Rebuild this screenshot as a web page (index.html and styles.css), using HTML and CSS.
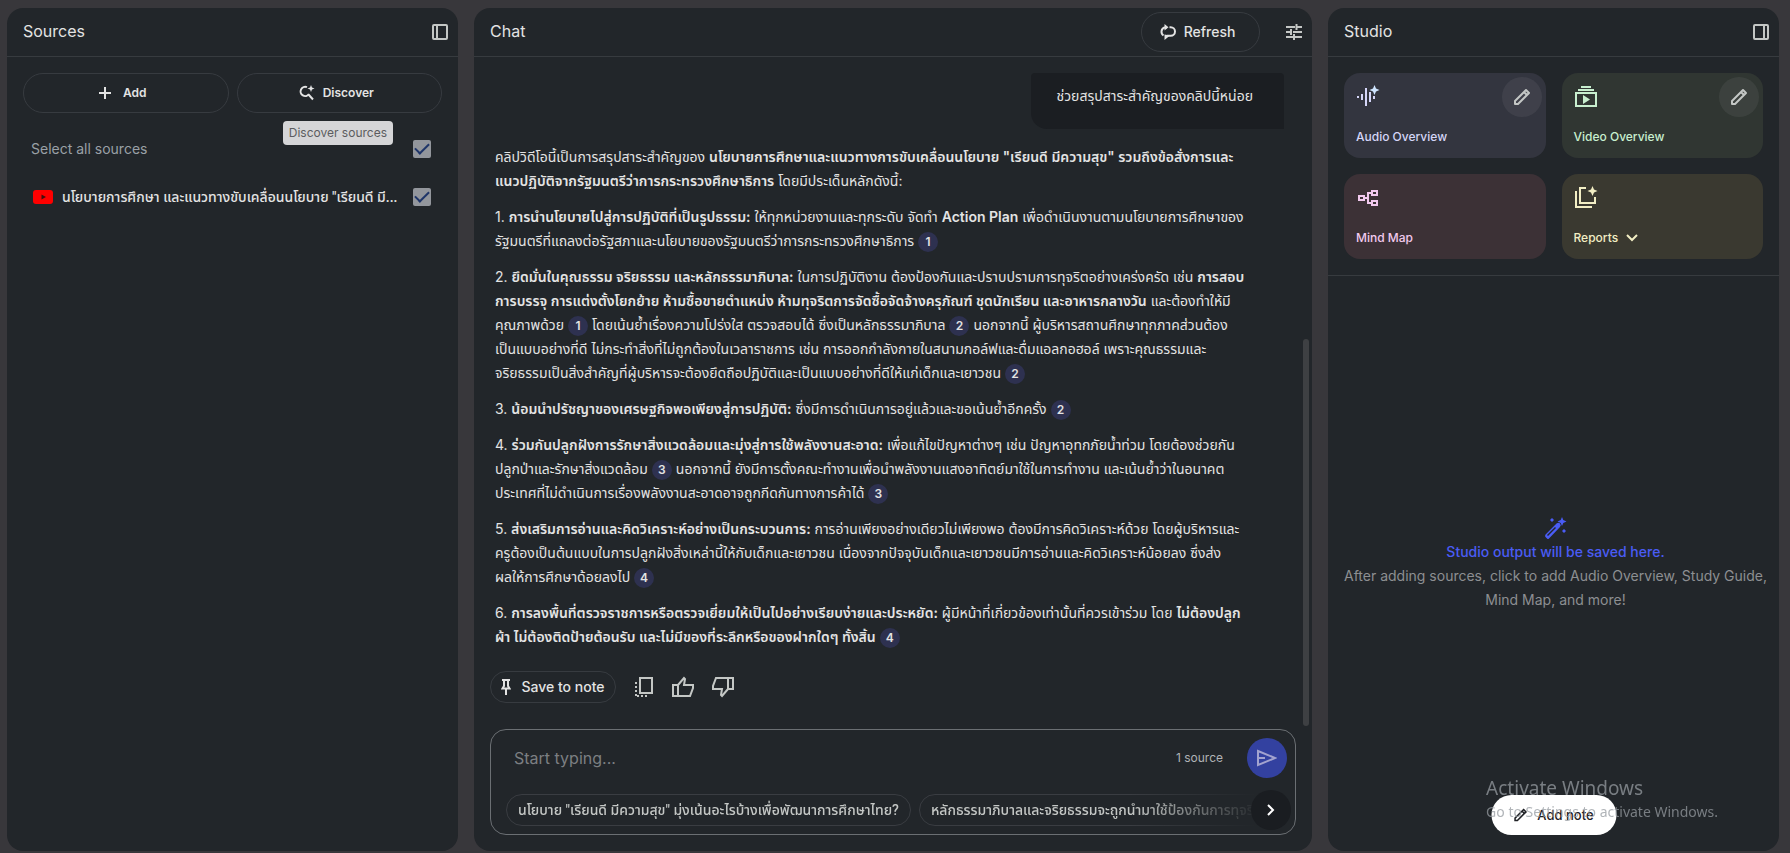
FILE: index.html
```html
<!DOCTYPE html>
<html lang="th">
<head>
    <meta charset="UTF-8">
    <meta name="viewport" content="width=device-width, initial-scale=1.0">
    <title>Notebook</title>
    <link rel="stylesheet" href="styles.css">
</head>
<body>
    <main class="workspace">
        <!-- Sources -->
        <section class="panel">
            <header class="panel-header">
                <h2>Sources</h2>
                <button class="icon-button" type="button" aria-label="Collapse sources">
                    <svg width="16" height="16" viewBox="0 0 16 16" fill="none" stroke="currentColor" stroke-width="2"><rect x="1" y="1" width="14" height="14" rx="1"/><path d="M5 1v14"/></svg>
                </button>
            </header>
            <div class="source-actions">
                <button class="pill" type="button">
                    <svg width="12" height="12" viewBox="0 0 12 12" stroke="currentColor" stroke-width="2"><path d="M6 0v12M0 6h12"/></svg>
                    Add
                </button>
                <button class="pill discover" type="button">
                    <svg width="16" height="16" viewBox="0 0 16 16"><path fill="none" stroke="currentColor" stroke-width="2" d="M8 2.200A4.600 4.600 0 1 0 10 9M9.500 9.500L14 14.500"/><path fill="currentColor" d="M12 0l1 2.500 2.500 1-2.500 1-1 2.500-1-2.500-2.500-1 2.500-1z"/></svg>
                    Discover
                </button>
                <span class="tooltip">Discover sources</span>
            </div>
            <div class="source-list">
                <div class="source-row">
                    <label class="select-all" for="all">Select all sources</label>
                    <input type="checkbox" id="all" checked>
                </div>
                <div class="source-row">
                    <svg class="youtube" width="20" height="14" viewBox="0 0 20 14"><rect width="20" height="14" rx="3" fill="#f00"/><path d="M8.500 4.500L13 7l-4.500 2.500z" fill="#40100f"/></svg>
                    <label class="source-name" for="source1">นโยบายการศึกษา และแนวทางขับเคลื่อนนโยบาย "เรียนดี มี...</label>
                    <input type="checkbox" id="source1" checked>
                </div>
            </div>
        </section>

        <!-- Chat -->
        <section class="panel">
            <header class="panel-header">
                <h2>Chat</h2>
                <button class="pill refresh" type="button">
                    <svg width="16" height="16" viewBox="0 0 16 16"><path fill="none" stroke="currentColor" stroke-width="2" d="M3.500 11.500A4.500 4.500 0 0 1 4.500 3.500H7M9.500 3.200h1.200a4.300 4.300 0 0 1 0 8.600H7"/><path fill="currentColor" d="M4.500 0L8.500 3.200l-4 3.200zM4.500 10.500v5.500L10 11.500z"/></svg>
                    Refresh
                </button>
                <button class="icon-button" type="button" aria-label="Configure chat">
                    <svg width="16" height="16" viewBox="0 0 16 16" fill="none" stroke="currentColor" stroke-width="2"><path d="M0 3h9M10.500 0v6M10.500 3H16M0 8h5M5 5v6M7 8h9M0 13h7M8 10v6M8 13h8"/></svg>
                </button>
            </header>
            <div class="messages">
                <div class="bubble">ช่วยสรุปสาระสำคัญของคลิปนี้หน่อย</div>
                <div class="answer">
                    <p>คลิปวิดีโอนี้เป็นการสรุปสาระสำคัญของ <b>นโยบายการศึกษาและแนวทางการขับเคลื่อนนโยบาย "เรียนดี มีความสุข" รวมถึงข้อสั่งการและ<br>แนวปฏิบัติจากรัฐมนตรีว่าการกระทรวงศึกษาธิการ</b> โดยมีประเด็นหลักดังนี้:</p>
                    <p>1. <b>การนำนโยบายไปสู่การปฏิบัติที่เป็นรูปธรรม:</b> ให้ทุกหน่วยงานและทุกระดับ จัดทำ <b>Action Plan</b> เพื่อดำเนินงานตามนโยบายการศึกษาของ<br>รัฐมนตรีที่แถลงต่อรัฐสภาและนโยบายของรัฐมนตรีว่าการกระทรวงศึกษาธิการ <button class="cite" type="button">1</button></p>
                    <p>2. <b>ยึดมั่นในคุณธรรม จริยธรรม และหลักธรรมาภิบาล:</b> ในการปฏิบัติงาน ต้องป้องกันและปราบปรามการทุจริตอย่างเคร่งครัด เช่น <b>การสอบ<br>การบรรจุ การแต่งตั้งโยกย้าย ห้ามซื้อขายตำแหน่ง ห้ามทุจริตการจัดซื้อจัดจ้างครุภัณฑ์ ชุดนักเรียน และอาหารกลางวัน</b> และต้องทำให้มี<br>คุณภาพด้วย <button class="cite" type="button">1</button> โดยเน้นย้ำเรื่องความโปร่งใส ตรวจสอบได้ ซึ่งเป็นหลักธรรมาภิบาล <button class="cite" type="button">2</button> นอกจากนี้ ผู้บริหารสถานศึกษาทุกภาคส่วนต้อง<br>เป็นแบบอย่างที่ดี ไม่กระทำสิ่งที่ไม่ถูกต้องในเวลาราชการ เช่น การออกกำลังกายในสนามกอล์ฟและดื่มแอลกอฮอล์ เพราะคุณธรรมและ<br>จริยธรรมเป็นสิ่งสำคัญที่ผู้บริหารจะต้องยึดถือปฏิบัติและเป็นแบบอย่างที่ดีให้แก่เด็กและเยาวชน <button class="cite" type="button">2</button></p>
                    <p>3. <b>น้อมนำปรัชญาของเศรษฐกิจพอเพียงสู่การปฏิบัติ:</b> ซึ่งมีการดำเนินการอยู่แล้วและขอเน้นย้ำอีกครั้ง <button class="cite" type="button">2</button></p>
                    <p>4. <b>ร่วมกันปลูกฝังการรักษาสิ่งแวดล้อมและมุ่งสู่การใช้พลังงานสะอาด:</b> เพื่อแก้ไขปัญหาต่างๆ เช่น ปัญหาอุทกภัยน้ำท่วม โดยต้องช่วยกัน<br>ปลูกป่าและรักษาสิ่งแวดล้อม <button class="cite" type="button">3</button> นอกจากนี้ ยังมีการตั้งคณะทำงานเพื่อนำพลังงานแสงอาทิตย์มาใช้ในการทำงาน และเน้นย้ำว่าในอนาคต<br>ประเทศที่ไม่ดำเนินการเรื่องพลังงานสะอาดอาจถูกกีดกันทางการค้าได้ <button class="cite" type="button">3</button></p>
                    <p>5. <b>ส่งเสริมการอ่านและคิดวิเคราะห์อย่างเป็นกระบวนการ:</b> การอ่านเพียงอย่างเดียวไม่เพียงพอ ต้องมีการคิดวิเคราะห์ด้วย โดยผู้บริหารและ<br>ครูต้องเป็นต้นแบบในการปลูกฝังสิ่งเหล่านี้ให้กับเด็กและเยาวชน เนื่องจากปัจจุบันเด็กและเยาวชนมีการอ่านและคิดวิเคราะห์น้อยลง ซึ่งส่ง<br>ผลให้การศึกษาด้อยลงไป <button class="cite" type="button">4</button></p>
                    <p>6. <b>การลงพื้นที่ตรวจราชการหรือตรวจเยี่ยมให้เป็นไปอย่างเรียบง่ายและประหยัด:</b> ผู้มีหน้าที่เกี่ยวข้องเท่านั้นที่ควรเข้าร่วม โดย <b>ไม่ต้องปลูก<br>ผ้า ไม่ต้องติดป้ายต้อนรับ และไม่มีของที่ระลึกหรือของฝากใดๆ ทั้งสิ้น</b> <button class="cite" type="button">4</button></p>
                </div>
                <div class="answer-actions">
                    <button class="pill save" type="button">
                        <svg width="10" height="16" viewBox="0 0 10 16"><path fill="none" stroke="currentColor" stroke-width="2" d="M1 1h8M3 1v6L1.500 9.500h7L7 7V1M5 9v7"/></svg>
                        Save to note
                    </button>
                    <button class="icon-button" type="button" aria-label="Copy">
                        <svg width="20" height="22" viewBox="0 0 20 22" fill="none" stroke="currentColor" stroke-width="2"><rect x="6" y="2" width="12" height="15"/><path stroke-dasharray="2 2" d="M2 6v15M3 20h12"/></svg>
                    </button>
                    <button class="icon-button" type="button" aria-label="Good response">
                        <svg width="22" height="22" viewBox="0 0 22 22" fill="none" stroke="currentColor" stroke-width="2"><path d="M1 9h5v11H1zM6 9l6-7 1 1-1 6h9v3l-3 8H6"/></svg>
                    </button>
                    <button class="icon-button" type="button" aria-label="Bad response">
                        <svg width="22" height="22" viewBox="0 0 22 22" fill="none" stroke="currentColor" stroke-width="2"><path d="M21 13h-5V2h5zM16 13l-6 7-1-1 1-6H1v-3l3-8h12"/></svg>
                    </button>
                </div>
                <span class="scroll-thumb"></span>
            </div>
            <form class="composer">
                <div class="composer-row">
                    <input class="query" type="text" placeholder="Start typing..." aria-label="Query">
                    <span class="source-count">1 source</span>
                    <button class="send" type="submit" aria-label="Send">
                        <svg width="20" height="18" viewBox="0 0 20 18" fill="none" stroke="currentColor" stroke-width="2"><path d="M1 2l17 7-17 7zM1 9h7"/></svg>
                    </button>
                </div>
                <div class="suggestions">
                    <button class="chip" type="button">นโยบาย "เรียนดี มีความสุข" มุ่งเน้นอะไรบ้างเพื่อพัฒนาการศึกษาไทย?</button>
                    <button class="chip" type="button">หลักธรรมาภิบาลและจริยธรรมจะถูกนำมาใช้ป้องกันการทุจริต</button>
                </div>
                <button class="next" type="button" aria-label="More suggestions">
                    <svg width="8" height="12" viewBox="0 0 8 12" fill="none" stroke="currentColor" stroke-width="2"><path d="M1 1l5 5-5 5"/></svg>
                </button>
            </form>
        </section>

        <!-- Studio -->
        <section class="panel">
            <header class="panel-header">
                <h2>Studio</h2>
                <button class="icon-button" type="button" aria-label="Collapse studio">
                    <svg width="16" height="16" viewBox="0 0 16 16" fill="none" stroke="currentColor" stroke-width="2"><rect x="1" y="1" width="14" height="14" rx="1"/><path d="M11 1v14"/></svg>
                </button>
            </header>
            <div class="tools">
                <div class="tool audio">
                    <svg width="24" height="24" viewBox="0 0 24 24"><path fill="none" stroke="currentColor" stroke-width="2" d="M2 11v2M6 9v6M10 3v18M14 7v10M18 11v3"/><path fill="#cfe5ff" d="M18.500 0l1.500 3.500L23.500 5 20 6.500 18.500 10 17 6.500 13.500 5 17 3.500z"/></svg>
                    <span>Audio Overview</span>
                    <button class="edit" type="button" aria-label="Customize audio">
                        <svg width="18" height="18" viewBox="0 0 18 18" fill="none" stroke="currentColor" stroke-width="2" stroke-linejoin="round"><path d="M2 16v-3L13 2l3 3L5 16zM11 4l3 3"/></svg>
                    </button>
                </div>
                <div class="tool video">
                    <svg width="24" height="24" viewBox="0 0 24 24"><path fill="none" stroke="currentColor" stroke-width="2" d="M7 2h10M4 5h16M2 8h20v13H2z"/><path fill="currentColor" d="M9 10l7 4.500L9 19z"/></svg>
                    <span>Video Overview</span>
                    <button class="edit" type="button" aria-label="Customize video">
                        <svg width="18" height="18" viewBox="0 0 18 18" fill="none" stroke="currentColor" stroke-width="2" stroke-linejoin="round"><path d="M2 16v-3L13 2l3 3L5 16zM11 4l3 3"/></svg>
                    </button>
                </div>
                <div class="tool map">
                    <svg width="24" height="24" viewBox="0 0 24 24" fill="none" stroke="currentColor" stroke-width="2"><path d="M3 10h5v4H3zM16 5h5v4h-5zM16 15h5v4h-5zM8 12h4M16 7h-4v10h4"/></svg>
                    <span>Mind Map</span>
                </div>
                <div class="tool reports">
                    <svg width="24" height="24" viewBox="0 0 24 24"><path fill="none" stroke="currentColor" stroke-width="2" d="M12 2H6v15h15v-6M2 5v16h16"/><path fill="currentColor" d="M18.500 0l1.500 3.500L23.500 5 20 6.500 18.500 10 17 6.500 13.500 5 17 3.500z"/></svg>
                    <span>Reports
                        <svg width="12" height="8" viewBox="0 0 12 8" fill="none" stroke="currentColor" stroke-width="2"><path d="M1 1l5 5 5-5"/></svg>
                    </span>
                </div>
            </div>
            <div class="studio-empty">
                <svg width="24" height="24" viewBox="0 0 24 24" fill="currentColor"><path fill-rule="evenodd" d="M1.500 18.500L12.500 7.500q2-1.500 3.500 0t0 3.500L5 22.500q-1 1-2 0l-1.500-1.500q-1-1 0-2.500zm2.500 1.500l8-8-1-1-8 8z"/><path d="M18 1l1.300 3L22.500 5.500 19.300 7 18 10l-1.300-3-3.200-1.500L16.700 4zM8 2l2 2-2 2-2-2zM20 13l2 2-2 2-2-2z"/></svg>
                <strong>Studio output will be saved here.</strong>
                <p>After adding sources, click to add Audio Overview, Study Guide, Mind Map, and more!</p>
            </div>
            <button class="add-note" type="button">
                <svg width="14" height="14" viewBox="0 0 18 18" fill="none" stroke="currentColor" stroke-width="2"><path d="M2 16v-3L13 2l3 3L5 16zM11 4l3 3"/></svg>
                Add note
            </button>
        </section>
    </main>
    <div class="watermark">
        <div class="watermark-title">Activate Windows</div>
        <div>Go to Settings to activate Windows.</div>
    </div>
</body>
</html>
```
FILE: styles.css
```css
* {
    box-sizing: border-box;
}
body {
    margin: 0;
    background: #38373b;
    color: #e3e3e3;
    font-family: Inter, "Noto Sans Thai", sans-serif;
    font-size: 14px;
    line-height: 24px;
}
button, input {
    font: inherit;
    color: inherit;
}
button {
    padding: 0;
    border: none;
    background: none;
    cursor: pointer;
}
svg {
    display: block;
    flex: none;
}
.workspace {
    display: grid;
    grid-template-columns: 451fr 838fr 451fr;
    gap: 16px;
    height: 100vh;
    padding: 8px 11px 2px 7px;
}
.panel {
    position: relative;
    display: flex;
    flex-direction: column;
    min-width: 0;
    min-height: 0;
    overflow: hidden;
    border-radius: 16px;
    background: #22262a;
}
.panel-header {
    display: flex;
    flex: none;
    align-items: center;
    height: 49px;
    padding: 0 10px 0 16px;
    border-bottom: 1px solid #373b3f;
}
.panel-header h2 {
    flex: 1;
    margin: 0 0 2px;
    font-size: 16px;
    font-weight: 400;
}
.icon-button {
    color: #c4c7c5;
}
.pill {
    display: flex;
    align-items: center;
    justify-content: center;
    gap: 12px;
    height: 40px;
    border: 1px solid #373b40;
    border-radius: 20px;
    font-weight: 500;
}
.source-actions .pill {
    padding-right: 6px;
    font-weight: 600;
}
.source-actions .discover {
    gap: 8px;
}
.refresh {
    gap: 8px;
    width: 119px;
    margin-right: 26px;
    padding-right: 6px;
}
.source-actions {
    position: relative;
    display: grid;
    grid-template-columns: 1fr 1fr;
    gap: 8px;
    padding: 16px 16px 12px;
    font-size: 12px;
}
.tooltip {
    position: absolute;
    top: 64px;
    right: 65px;
    padding: 0 6px;
    border-radius: 4px;
    background: #d5d5d7;
    color: #5c5d60;
}
.source-list {
    padding: 0 27px 0 24px;
}
.source-row {
    display: flex;
    align-items: center;
    gap: 9px;
    height: 48px;
}
.source-row label {
    flex: 1;
    min-width: 0;
    overflow: hidden;
    white-space: nowrap;
}
.select-all {
    color: #9aa0a6;
}
.youtube {
    margin-left: 2px;
}
.source-name, .chip {
    font-family: Roboto, "Noto Sans Thai", sans-serif;
    font-weight: 500;
}
input[type="checkbox"] {
    display: flex;
    justify-content: center;
    width: 18px;
    height: 18px;
    margin: 0;
    border-radius: 2px;
    background: #93969c;
    appearance: none;
}
input[type="checkbox"]:checked::after {
    content: "";
    width: 6px;
    height: 12px;
    border: solid #1f3569;
    border-width: 0 2px 2px 0;
    transform: rotate(45deg);
}
.messages {
    position: relative;
    display: flex;
    flex: 1;
    flex-direction: column;
    min-height: 0;
    padding: 16px 28px 0 16px;
    overflow: hidden;
}
.bubble {
    align-self: flex-end;
    height: 56px;
    padding: 11px 31px 0 26px;
    border-radius: 4px 4px 0 16px;
    background: #1b1e22;
    white-space: nowrap;
}
.answer {
    padding: 16px 0 22px 5px;
    white-space: nowrap;
}
.answer p {
    margin: 0 0 12px;
}
.answer p:last-child {
    margin-bottom: 0;
}
.answer b {
    font-weight: 600;
}
.cite {
    width: 20px;
    height: 20px;
    border-radius: 10px;
    background: #2e3150;
    font-size: 12px;
    font-weight: 600;
    line-height: 20px;
    vertical-align: middle;
}
.answer-actions {
    display: flex;
    align-items: center;
    gap: 18px;
}
.save {
    gap: 10px;
    width: 126px;
    height: 32px;
}
.scroll-thumb {
    position: absolute;
    top: 282px;
    right: 3px;
    bottom: 3px;
    width: 6px;
    border-radius: 3px;
    background: #3e4043;
}
.composer {
    position: relative;
    flex: none;
    margin: 0 16px 16px;
    padding: 8px 8px 8px 15px;
    border: 1px solid #6b6f73;
    border-radius: 16px;
}
.composer-row {
    display: flex;
    align-items: center;
    margin-bottom: 16px;
}
.query {
    flex: 1;
    min-width: 0;
    padding: 0 8px;
    border: none;
    outline: none;
    background: none;
    font-size: 16px;
}
.query::placeholder {
    color: #7c7f82;
}
.source-count {
    margin-right: 24px;
    color: #b0b3b6;
    font-size: 12px;
}
.send {
    display: flex;
    align-items: center;
    justify-content: center;
    width: 40px;
    height: 40px;
    border-radius: 20px;
    background: #3341a0;
    color: #a3a3cf;
}
.suggestions {
    display: flex;
    gap: 8px;
    margin-right: 28px;
    overflow: hidden;
    mask-image: linear-gradient(to right, #000 83%, transparent);
}
.chip {
    flex: none;
    height: 32px;
    padding: 0 11px;
    border: 1px solid #3a3d42;
    border-radius: 16px;
    color: #c4c7c5;
}
.next {
    position: absolute;
    right: 4px;
    bottom: 4px;
    display: flex;
    align-items: center;
    justify-content: center;
    width: 40px;
    height: 40px;
    border-radius: 20px;
    background: #1a1d21;
    color: #fff;
}
.tools {
    display: grid;
    grid-template-columns: 1fr 1fr;
    gap: 16px;
    padding: 16px;
    border-bottom: 1px solid #373b3f;
}
.tool {
    position: relative;
    display: flex;
    flex-direction: column;
    justify-content: space-between;
    height: 85px;
    padding: 12px 12px 9px;
    border-radius: 16px;
    font-size: 12px;
    font-weight: 500;
}
.tool span {
    display: flex;
    align-items: center;
    gap: 8px;
}
.audio {
    background: #33353f;
    color: #d5d6f8;
}
.video {
    background: #303632;
    color: #c8efcf;
}
.map {
    background: #3c3136;
    color: #f2c9ee;
}
.reports {
    background: #3a3930;
    color: #f2eec4;
}
.edit {
    position: absolute;
    top: 4px;
    right: 4px;
    display: flex;
    align-items: center;
    justify-content: center;
    width: 40px;
    height: 40px;
    border-radius: 20px;
    background: rgba(255, 255, 255, 0.06);
    color: #c4c7c5;
}
.studio-empty {
    display: flex;
    flex: 1;
    flex-direction: column;
    align-items: center;
    justify-content: center;
    padding: 0 8px 0 12px;
    color: #8d8f92;
    text-align: center;
}
.studio-empty svg, .studio-empty strong {
    color: #4a5cf5;
}
.studio-empty strong {
    font-weight: 500;
}
.studio-empty p {
    margin: 0;
}
.add-note {
    position: absolute;
    bottom: 16px;
    left: 50%;
    display: flex;
    align-items: center;
    justify-content: center;
    gap: 10px;
    width: 125px;
    height: 40px;
    border-radius: 20px;
    background: #fff;
    color: #1f2125;
    font-size: 13px;
    font-weight: 500;
    transform: translateX(-50%);
}
.watermark {
    position: fixed;
    right: 72px;
    bottom: 29px;
    color: rgba(150, 155, 160, 0.75);
    font-family: "Noto Sans", sans-serif;
    font-size: 14px;
    pointer-events: none;
}
.watermark-title {
    font-size: 19px;
}
```
